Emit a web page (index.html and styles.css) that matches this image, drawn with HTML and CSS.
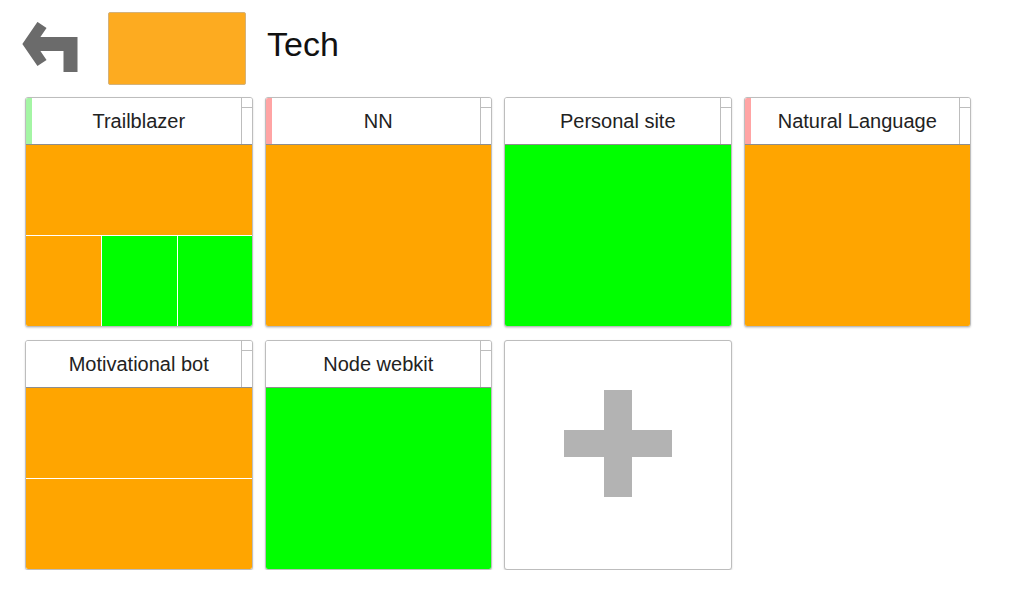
FILE: index.html
```html
<!DOCTYPE html>
<html>
<head>
<meta charset="utf-8">
<link rel="stylesheet" href="styles.css">
</head>
<body>
<div class="topbar">
  <svg class="back" width="60" height="52" viewBox="0 0 60 52">
    <polyline points="22,3 9,22 22,41" fill="none" stroke="#6b6b6b" stroke-width="11" stroke-linejoin="miter" stroke-miterlimit="10"/>
    <path d="M10 22 H50.5 V50" fill="none" stroke="#6b6b6b" stroke-width="14" stroke-linejoin="miter"/>
  </svg>
  <div class="swatch"></div>
  <div class="title">Tech</div>
</div>
<div class="grid">
  <div class="card">
    <div class="head"><span class="strip green"></span><span class="name">Trailblazer</span><span class="scroll"><span class="thumb"></span></span></div>
    <div class="body split3">
      <div class="o wide"></div><div class="o"></div><div class="g"></div><div class="g"></div>
    </div>
  </div>
  <div class="card">
    <div class="head"><span class="strip pink"></span><span class="name">NN</span><span class="scroll"><span class="thumb"></span></span></div>
    <div class="body"><div class="o"></div></div>
  </div>
  <div class="card">
    <div class="head"><span class="name">Personal site</span><span class="scroll"><span class="thumb"></span></span></div>
    <div class="body"><div class="g"></div></div>
  </div>
  <div class="card">
    <div class="head"><span class="strip pink"></span><span class="name">Natural Language</span><span class="scroll"><span class="thumb"></span></span></div>
    <div class="body"><div class="o"></div></div>
  </div>
  <div class="card">
    <div class="head"><span class="name">Motivational bot</span><span class="scroll"><span class="thumb"></span></span></div>
    <div class="body split2"><div class="o"></div><div class="o"></div></div>
  </div>
  <div class="card">
    <div class="head"><span class="name">Node webkit</span><span class="scroll"><span class="thumb"></span></span></div>
    <div class="body"><div class="g"></div></div>
  </div>
  <div class="card add">
    <svg width="108" height="107" viewBox="0 0 108 107">
      <rect x="40" y="0" width="28" height="107" fill="#b3b3b3"/>
      <rect x="0" y="40" width="108" height="27" fill="#b3b3b3"/>
    </svg>
  </div>
</div>
</body>
</html>
```

FILE: styles.css
```css
html, body {
  margin: 0;
  padding: 0;
  background: #fff;
  font-family: "Liberation Sans", Arial, sans-serif;
}
.topbar {
  display: flex;
  align-items: flex-start;
  padding: 12px 0 0 20px;
  height: 73px;
}
.back {
  display: block;
  margin-top: 10px;
}
.swatch {
  width: 136px;
  height: 71px;
  margin-left: 28px;
  background: #fdab20;
  border: 1px solid #d4b27a;
  border-radius: 2px;
}
.title {
  margin-left: 21px;
  margin-top: 15px;
  font-size: 34px;
  line-height: 34px;
  color: #111;
}
.grid {
  display: grid;
  grid-template-columns: repeat(4, 227.5px);
  grid-auto-rows: 230px;
  column-gap: 12px;
  row-gap: 13px;
  padding: 12px 0 0 25px;
}
.card {
  box-sizing: border-box;
  border: 1px solid #bdbdbd;
  border-radius: 3px;
  box-shadow: 0 1px 2px rgba(0, 0, 0, 0.18);
  overflow: hidden;
  display: flex;
  flex-direction: column;
  background: #fff;
}
.head {
  position: relative;
  height: 46px;
  flex: none;
  border-bottom: 1px solid #8e8e8e;
  display: flex;
  align-items: center;
  justify-content: center;
  background: #fff;
}
.name {
  font-size: 20px;
  line-height: 22px;
  margin-top: -1px;
  color: #222;
  white-space: nowrap;
}
.strip {
  position: absolute;
  left: 0;
  top: 0;
  bottom: 0;
  width: 6px;
}
.strip.green { background: #a4f5a4; }
.strip.pink { background: #ffa4a4; }
.scroll {
  position: absolute;
  right: 0;
  top: 0;
  bottom: 0;
  width: 10px;
  border-left: 1px solid #bdbdbd;
}
.thumb {
  display: block;
  height: 9px;
  border-bottom: 1px solid #bdbdbd;
}
.body {
  flex: 1;
  display: grid;
  gap: 1px;
  background: #fff;
}
.split3 {
  grid-template-columns: 75px 75px 1fr;
  grid-template-rows: 90px 1fr;
}
.split3 .wide { grid-column: 1 / 4; }
.split2 {
  grid-template-rows: 90px 1fr;
}
.o { background: #ffa500; }
.g { background: #00ff00; }
.add {
  align-items: center;
  justify-content: center;
  padding-bottom: 23px;
}
.add svg { display: block; }
```
